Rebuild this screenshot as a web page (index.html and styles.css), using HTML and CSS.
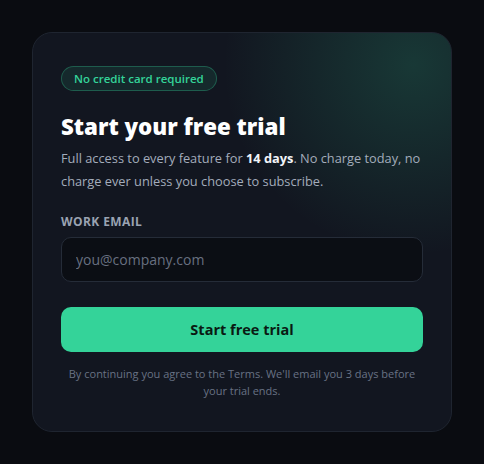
FILE: index.html
```html
<!DOCTYPE html>
<html lang="en">
<head>
  <meta charset="UTF-8" />
  <meta name="viewport" content="width=device-width, initial-scale=1.0"/>
  <title>Start your free trial</title>
  <link rel="stylesheet" href="styles.css">
</head>
<body>
  <!-- Trial card -->
  <div class="trial-card">
    <span class="badge">No credit card required</span>
    <h2>Start your free trial</h2>
    <p class="lead">Full access to every feature for <strong>14 days</strong>. No charge today, no charge ever unless you choose to subscribe.</p>

    <form onsubmit="event.preventDefault();">
      <label for="email" class="field-label">Work email</label>
      <input type="email" id="email" class="field-input" placeholder="you@company.com">
      <button type="submit" class="btn-trial">Start free trial</button>
    </form>

    <p class="fineprint">By continuing you agree to the Terms. We'll email you 3 days before your trial ends.</p>
  </div>
</body>
</html>
```

FILE: styles.css
```css
* {
  box-sizing: border-box;
  margin: 0;
  padding: 0;
  font-family: 'Open Sans', 'Noto Sans', sans-serif;
}

body {
  height: 100vh;
  background-color: #0a0c11;
  display: flex;
  justify-content: center;
  align-items: center;
}

/**********Card*************/
.trial-card {
  width: 420px;
  height: 400px;
  padding: 33px 28px;
  border: 1px solid #1f2530;
  border-radius: 20px;
  background:
    radial-gradient(circle at 91% 8%, rgba(52, 211, 153, 0.18), rgba(52, 211, 153, 0) 36%),
    #121620;
}

.badge {
  display: inline-block;
  padding: 4px 12px;
  font-size: 11.5px;
  font-weight: 600;
  line-height: 15px;
  color: #34d399;
  background: rgba(52, 211, 153, 0.1);
  border: 1px solid rgba(52, 211, 153, 0.3);
  border-radius: 999px;
}

.trial-card h2 {
  margin-top: 21px;
  font-size: 22.3px;
  font-weight: 800;
  line-height: 30px;
  color: #ffffff;
}

.lead {
  margin-top: 5px;
  font-size: 12.8px;
  line-height: 22.5px;
  color: #a3acbb;
}

.lead strong {
  color: #f1f4f8;
  font-weight: 700;
}

form {
  display: flex;
  flex-direction: column;
  margin-top: 22px;
}

.field-label {
  font-size: 12px;
  font-weight: 700;
  letter-spacing: 0.4px;
  text-transform: uppercase;
  color: #9aa3b2;
  line-height: 16px;
}

.field-input {
  margin-top: 7px;
  height: 45px;
  padding: 0 14px;
  font-size: 14px;
  color: #e5e7eb;
  background: #0b0e14;
  border: 1px solid #252c38;
  border-radius: 10px;
  outline: none;
}

.field-input::placeholder {
  color: #687080;
}

.btn-trial {
  margin-top: 25px;
  height: 45px;
  background-color: #34d399;
  border: none;
  border-radius: 10px;
  color: #0a1a13;
  font-size: 14.5px;
  font-weight: 700;
  cursor: pointer;
}

.fineprint {
  margin-top: 13px;
  text-align: center;
  font-size: 11px;
  line-height: 17px;
  color: #687284;
}
```
